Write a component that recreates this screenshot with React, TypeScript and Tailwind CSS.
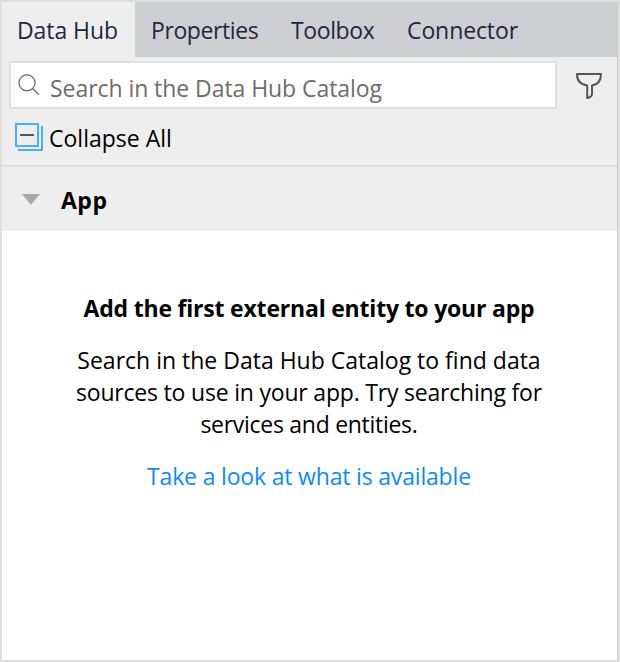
const tabs = [
  { label: "Data Hub", active: true, layout: "w-[133px] pl-[15px] tracking-[-0.08px]" },
  { label: "Properties", active: false, layout: "w-[140px] pl-[16px] tracking-[-0.4px]" },
  { label: "Toolbox", active: false, layout: "w-[116px] pl-[16px] tracking-[-0.4px]" },
  { label: "Connector", active: false, layout: "w-[142px] pl-[16px] tracking-[-0.1px]" },
];

function SearchIcon() {
  return (
    <svg width="22" height="22" viewBox="0 0 22 22" fill="none" stroke="#777777" strokeWidth="1.4">
      <circle cx="9" cy="8.8" r="8" />
      <path d="M14.6 14.4L21 20.8" />
    </svg>
  );
}

function FilterIcon() {
  return (
    <svg width="28" height="28" viewBox="0 0 28 28" fill="none" stroke="#555555" strokeWidth="2" strokeLinejoin="round">
      <path d="M2 2H26C26 8.5 23 12.6 17 13.4V22.5C17 24 14 26 12.2 26V13.4C5.5 12.6 2 8.5 2 2Z" />
    </svg>
  );
}

function CollapseIcon() {
  return (
    <svg width="28" height="28" viewBox="0 0 28 28" fill="none" stroke="#47aef8" strokeWidth="2">
      <path d="M1 1H23V23H1Z" />
      <path d="M27 3V27H3" />
      <path d="M5 12H19" stroke="#555555" />
    </svg>
  );
}

export default function App() {
  return (
    <div className="flex h-[662px] w-[620px] flex-col border-2 border-[#dedede] bg-white font-['Open_Sans','Noto_Sans',sans-serif] text-[23px] leading-[32px] text-black">
      <div className="flex min-h-0 flex-1 flex-col border-r border-[#cccccc]">
        <div className="flex h-[55px] shrink-0 bg-[#cecfd3] text-[#22283a]">
          {tabs.map((tab) => (
            <button
              key={tab.label}
              className={`${tab.layout} ${tab.active ? "bg-[#eeeeee]" : ""} whitespace-nowrap pt-px text-left`}
            >
              {tab.label}
            </button>
          ))}
        </div>

        <div className="h-[108px] shrink-0 bg-[#eeeeee] pl-[7px] pt-[4px]">
          <div className="flex items-center">
            <div className="flex h-[48px] w-[548px] items-start border-2 border-[#e0e0e0] bg-white pl-[7px] pt-[9px] text-[#6d6d6d]">
              <div className="pt-[2px]">
                <SearchIcon />
              </div>
              <span className="ml-[10px] whitespace-nowrap tracking-[-0.06px]">Search in the Data Hub Catalog</span>
            </div>
            <div className="ml-[18px] mt-px">
              <FilterIcon />
            </div>
          </div>
          <div className="mt-[13px] flex pl-[6px]">
            <div className="mt-px">
              <CollapseIcon />
            </div>
            <span className="ml-[6px] whitespace-nowrap">Collapse All</span>
          </div>
        </div>

        <div className="flex h-[66px] shrink-0 items-center border-t-2 border-[#e0e0e0] bg-[#eeeeee] pl-[20px]">
          <svg width="18" height="11" viewBox="0 0 18 11" fill="#a9a9a9">
            <path d="M0 0H18L9 11Z" />
          </svg>
          <span className="ml-[21px] pt-[2px] font-bold tracking-[0.5px]">App</span>
        </div>

        <div className="flex flex-col items-center pr-px pt-[61px] text-center">
          <h2 className="whitespace-nowrap font-bold tracking-[-0.2px]">Add the first external entity to your app</h2>
          <p className="mt-[20px] flex flex-col items-center whitespace-nowrap">
            <span>Search in the Data Hub Catalog to find data</span>
            <span className="tracking-[-0.2px]">sources to use in your app. Try searching for</span>
            <span className="tracking-[-0.28px]">services and entities.</span>
          </p>
          <a className="mt-[20px] whitespace-nowrap tracking-[-0.18px] text-[#0a8cff]">Take a look at what is available</a>
        </div>
      </div>
    </div>
  );
}
